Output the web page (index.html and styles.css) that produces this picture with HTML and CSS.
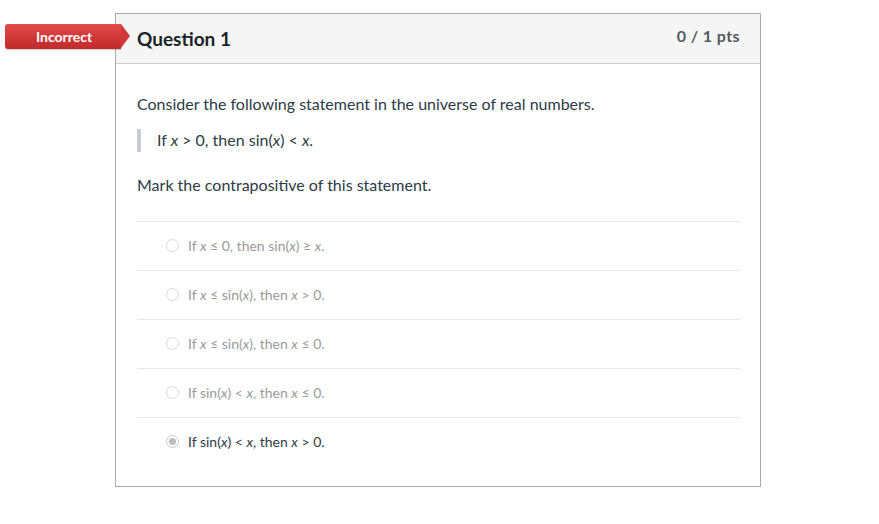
FILE: index.html
```html
<!DOCTYPE html>
<html lang="en">
<head>
<meta charset="utf-8">
<title>Question 1</title>
<link rel="stylesheet" href="styles.css">
</head>
<body>
<div class="page">
  <div class="question">
    <div class="badge">Incorrect</div>
    <div class="card">
      <div class="header">
        <h2 class="title">Question 1</h2>
        <span class="pts">0 / 1 pts</span>
      </div>
      <div class="content">
        <p class="text">Consider the following statement in the universe of real numbers.</p>
        <blockquote class="quote">If <i>x</i> &gt; 0, then sin(<i>x</i>) &lt; <i>x</i>.</blockquote>
        <p class="text mark">Mark the contrapositive of this statement.</p>
        <div class="answers">
          <div class="answer"><span class="radio"></span><span class="label">If <i>x</i> ≤ 0, then sin(<i>x</i>) ≥ <i>x</i>.</span></div>
          <div class="answer"><span class="radio"></span><span class="label">If <i>x</i> ≤ sin(<i>x</i>), then <i>x</i> &gt; 0.</span></div>
          <div class="answer"><span class="radio"></span><span class="label">If <i>x</i> ≤ sin(<i>x</i>), then <i>x</i> ≤ 0.</span></div>
          <div class="answer"><span class="radio"></span><span class="label">If sin(<i>x</i>) &lt; <i>x</i>, then <i>x</i> ≤ 0.</span></div>
          <div class="answer selected"><span class="radio"></span><span class="label">If sin(<i>x</i>) &lt; <i>x</i>, then <i>x</i> &gt; 0.</span></div>
        </div>
      </div>
    </div>
  </div>
</div>
</body>
</html>
```

FILE: styles.css
```css
* { box-sizing: border-box; }
html, body { margin: 0; padding: 0; background: #fff; }
body {
  font-family: Lato, "Open Sans", "Liberation Sans", sans-serif;
  color: #2d3b45;
}
.page {
  padding: 13px 0 0 115px;
}
.question {
  position: relative;
  width: 646px;
}
.badge {
  position: absolute;
  left: -110px;
  top: 11px;
  width: 116px;
  height: 25px;
  background: linear-gradient(#e24a4a, #c12a2a);
  border-radius: 3px 0 0 3px;
  color: #fff;
  font-weight: 700;
  font-size: 14px;
  line-height: 25px;
  padding-left: 31px;
  z-index: 2;
  box-shadow: 0 1px 1px rgba(0,0,0,0.2);
}
.badge::after {
  content: "";
  position: absolute;
  right: -9px;
  top: 0;
  border-style: solid;
  border-width: 12.5px 0 12.5px 9px;
  border-color: transparent transparent transparent #d13838;
}
.card {
  border: 1px solid #aaaaaa;
  background: #fff;
}
.header {
  height: 50px;
  background: #f5f5f5;
  border-bottom: 1px solid #c7cdd1;
  display: flex;
  justify-content: space-between;
  align-items: flex-start;
  padding: 0 20px 0 21px;
}
.title {
  margin: 0;
  font-size: 19px;
  font-weight: 700;
  line-height: 22px;
  padding-top: 14px;
  color: #1c2329;
}
.pts {
  font-size: 16px;
  letter-spacing: 0.4px;
  font-weight: 700;
  line-height: 20px;
  padding-top: 12px;
  color: #555b60;
}
.content {
  padding: 29px 20px 20px 21px;
}
.text {
  margin: 0;
  font-size: 16px;
  line-height: 22px;
}
.quote {
  margin: 14px 0 0 0;
  border-left: 4px solid #c7cdd1;
  padding-left: 16px;
  font-size: 16px;
  line-height: 22px;
  height: 23px;
}
.mark {
  margin-top: 22px;
}
.answers {
  margin-top: 25px;
}
.answer {
  border-top: 1px solid #e8e8e8;
  height: 49px;
  display: flex;
  align-items: center;
  padding-left: 29px;
  padding-bottom: 1px;
}
.radio {
  width: 13px;
  height: 13px;
  border-radius: 50%;
  border: 1px solid #d8d8d8;
  background: #fff;
  margin-right: 9px;
  flex: none;
  position: relative;
}
.selected .radio {
  border-color: #c8c8c8;
}
.selected .radio::after {
  content: "";
  position: absolute;
  left: 2px;
  top: 2px;
  width: 7px;
  height: 7px;
  border-radius: 50%;
  background: #bdbdbd;
}
.label {
  font-size: 14px;
  line-height: 18px;
  color: #9a9a9a;
}
.selected .label {
  color: #2d3b45;
}
```
